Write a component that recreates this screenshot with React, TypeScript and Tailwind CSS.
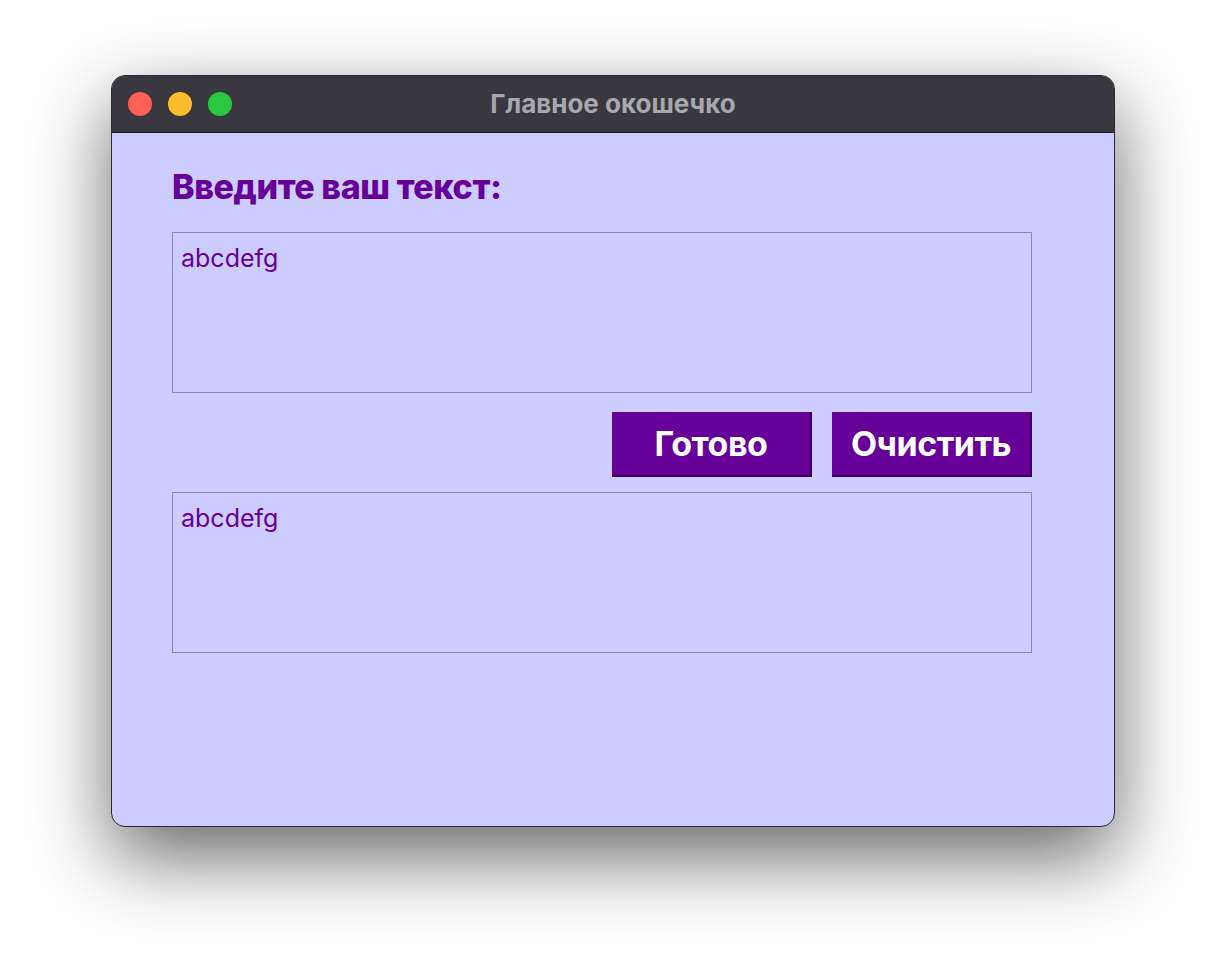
import { useState } from 'react';

export default function App() {
  const [text, setText] = useState('abcdefg');
  const [result, setResult] = useState('abcdefg');

  return (
    <div
      className="w-[1226px] h-[974px] bg-white pt-[75px] pl-[111px]"
      style={{ fontFamily: 'Inter, "Noto Sans", sans-serif' }}
    >
      <div className="w-[1004px] h-[752px] rounded-[14px] border border-[#2a2a2e] overflow-hidden bg-[#ccccff] shadow-[0_30px_80px_rgba(0,0,0,0.6)] flex flex-col">
        <div className="h-[57px] shrink-0 bg-[#39383e] border-b border-[#1a1a1e] flex items-center relative">
          <div className="flex items-center gap-[16px] pl-[16px]">
            <span className="w-[24px] h-[24px] rounded-full bg-[#fe5f57]" />
            <span className="w-[24px] h-[24px] rounded-full bg-[#febc2e]" />
            <span className="w-[24px] h-[24px] rounded-full bg-[#28c840]" />
          </div>
          <div className="absolute inset-0 flex items-center justify-center text-[26px] font-bold text-[#a8a7ad] pb-[2px]">
            Главное окошечко
          </div>
        </div>

        <div className="pl-[60px] pr-[82px] pt-[34px] flex flex-col">
          <h1 className="text-[34px] leading-[40px] font-extrabold tracking-[-0.4px] text-[#660099]">
            Введите ваш текст:
          </h1>
          <textarea
            autoFocus
            value={text}
            onChange={(e) => setText(e.target.value)}
            onFocus={(e) => e.currentTarget.setSelectionRange(7, 7)}
            className="mt-[25px] h-[161px] w-[860px] resize-none bg-[#ccccff] border border-[#8a88b0] px-[8px] py-[9px] text-[25px] leading-[33px] text-[#660099] caret-black outline-none"
          />
          <div className="mt-[19px] flex justify-end gap-[20px]">
            <button
              type="button"
              onClick={() => setResult(text)}
              className="w-[200px] h-[65px] bg-[#660099] border-r-2 border-b-2 border-[#3a0060] text-white text-[34px] font-bold tracking-[-0.5px]"
            >
              Готово
            </button>
            <button
              type="button"
              onClick={() => {
                setText('');
                setResult('');
              }}
              className="w-[200px] h-[65px] bg-[#660099] border-r-2 border-b-2 border-[#3a0060] text-white text-[34px] font-bold tracking-[-0.5px]"
            >
              Очистить
            </button>
          </div>
          <div className="mt-[15px] h-[161px] w-[860px] border border-[#8a88b0] px-[8px] py-[9px] text-[25px] leading-[33px] text-[#660099]">
            {result}
          </div>
        </div>
      </div>
    </div>
  );
}
